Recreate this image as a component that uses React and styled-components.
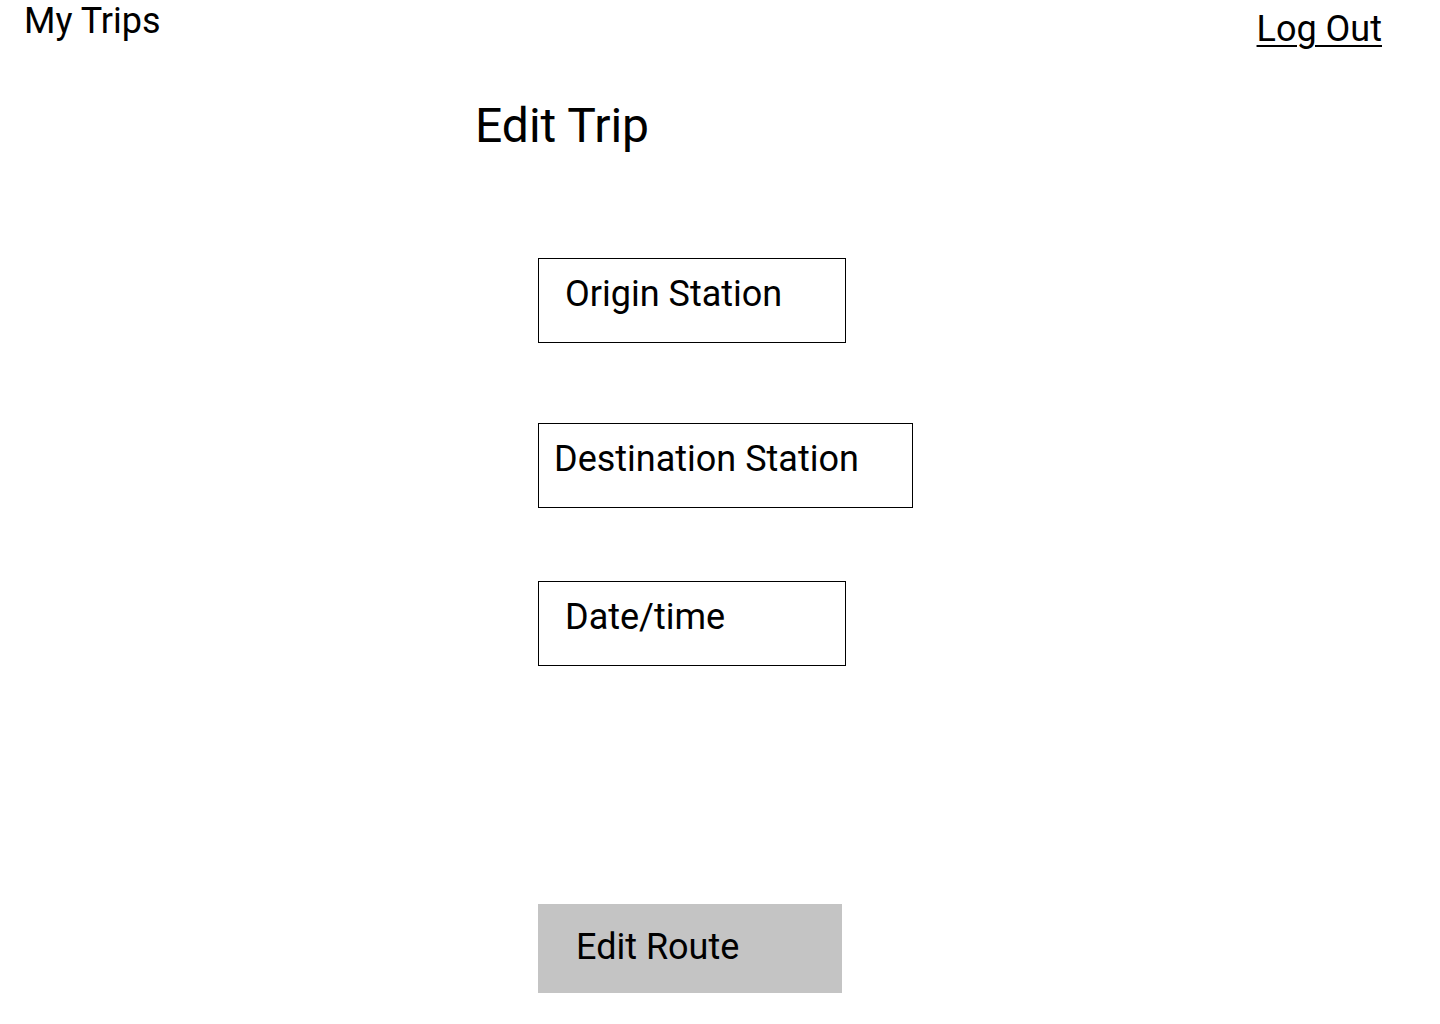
import styled, { createGlobalStyle } from "styled-components";

const GlobalStyle = createGlobalStyle`
  html, body {
    margin: 0;
    padding: 0;
    background: #ffffff;
  }
  body {
    font-family: Roboto, "Liberation Sans", sans-serif;
    color: #000000;
  }
`;

const fields = [
  { label: "Origin Station", width: 308, pad: 26, top: 104.5 },
  { label: "Destination Station", width: 375, pad: 15, top: 80 },
  { label: "Date/time", width: 308, pad: 26, top: 73 }
];

function App() {
  return (
    <Page>
      <GlobalStyle />
      <Header>
        <NavTitle>My Trips</NavTitle>
        <LogOut href="#">Log Out</LogOut>
      </Header>
      <Main>
        <Title>Edit Trip</Title>
        <Form>
          {fields.map((f) => (
            <Field key={f.label} $width={f.width} $pad={f.pad} $top={f.top}>
              {f.label}
            </Field>
          ))}
          <RouteButton>Edit Route</RouteButton>
        </Form>
      </Main>
    </Page>
  );
}

export default App;

const Page = styled.div`
  width: 1440px;
  min-height: 1024px;
  background: #ffffff;
`;

const Header = styled.header`
  display: flex;
  justify-content: space-between;
  align-items: flex-start;
  height: 42px;
  padding: 0 58px 0 24px;
`;

const NavTitle = styled.div`
  font-size: 36px;
  line-height: 42px;
`;

const LogOut = styled.a`
  margin-top: 8px;
  font-size: 36px;
  line-height: 42px;
  color: #000000;
  text-decoration: underline;
  text-decoration-thickness: 2px;
  text-underline-offset: 4px;
`;

const Main = styled.main`
  display: flex;
  flex-direction: column;
  padding-left: 475px;
`;

const Title = styled.h1`
  margin: 55.5px 0 0 0;
  font-size: 48px;
  font-weight: 400;
  line-height: 56px;
`;

const Form = styled.div`
  display: flex;
  flex-direction: column;
  align-items: flex-start;
  margin-left: 63px;
`;

const Field = styled.div`
  box-sizing: border-box;
  width: ${(p) => p.$width}px;
  height: 85px;
  margin-top: ${(p) => p.$top}px;
  padding: 14px 0 0 ${(p) => p.$pad}px;
  border: 1px solid #000000;
  font-size: 36px;
  line-height: 42px;
`;

const RouteButton = styled.button`
  box-sizing: border-box;
  display: flex;
  align-items: flex-start;
  width: 304px;
  height: 89px;
  margin-top: 238px;
  padding: 21.5px 0 0 38px;
  border: none;
  background: #c4c4c4;
  font-family: Roboto, "Liberation Sans", sans-serif;
  font-size: 36px;
  line-height: 42px;
  color: #000000;
  text-align: left;
`;
